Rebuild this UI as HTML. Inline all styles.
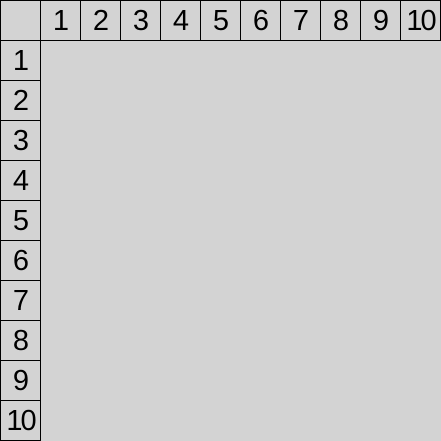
<!DOCTYPE html>
<html><head><style>
html,body{margin:0;padding:0;width:441px;height:441px;background:#d3d3d3;overflow:hidden}
.c{position:absolute;width:39px;height:39px;border:1px solid #000;text-align:center;line-height:41px;font-family:"Liberation Sans",sans-serif;font-size:29px;color:#000;letter-spacing:-1px;overflow:hidden;white-space:nowrap}
</style></head><body>
<div class="c" style="left:0;top:0"></div>
<div class="c" style="left:40px;top:0">1</div>
<div class="c" style="left:80px;top:0">2</div>
<div class="c" style="left:120px;top:0">3</div>
<div class="c" style="left:160px;top:0">4</div>
<div class="c" style="left:200px;top:0">5</div>
<div class="c" style="left:240px;top:0">6</div>
<div class="c" style="left:280px;top:0">7</div>
<div class="c" style="left:320px;top:0">8</div>
<div class="c" style="left:360px;top:0">9</div>
<div class="c" style="left:400px;top:0;letter-spacing:-2px">10</div>
<div class="c" style="left:0;top:40px">1</div>
<div class="c" style="left:0;top:80px">2</div>
<div class="c" style="left:0;top:120px">3</div>
<div class="c" style="left:0;top:160px">4</div>
<div class="c" style="left:0;top:200px">5</div>
<div class="c" style="left:0;top:240px">6</div>
<div class="c" style="left:0;top:280px">7</div>
<div class="c" style="left:0;top:320px">8</div>
<div class="c" style="left:0;top:360px">9</div>
<div class="c" style="left:0;top:400px;letter-spacing:-2px">10</div>
</body></html>
